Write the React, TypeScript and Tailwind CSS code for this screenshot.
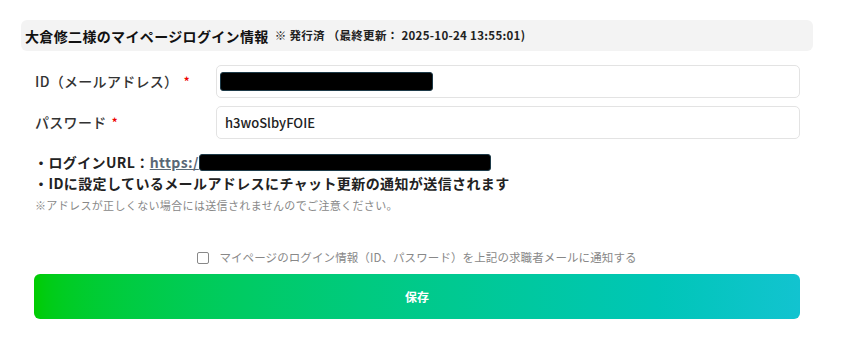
import React from "react";

const font = { fontFamily: '"Noto Sans CJK JP", "Noto Sans", sans-serif' };

function Redact({ w, h }: { w: number; h: number }) {
  return (
    <span
      className="inline-block bg-black border border-[#1d3a48] rounded-[3px] align-middle"
      style={{ width: w, height: h }}
    />
  );
}

export default function App() {
  return (
    <div className="w-[848px] h-[338px] bg-white pl-[21px] pr-[35px] pt-[20px] text-[#333]" style={font}>
      <div className="h-[31px] bg-[#f3f3f3] rounded-md flex items-center px-[4px]">
        <span className="text-[14px] tracking-[0.35px] font-bold text-[#111] leading-none">大倉修二様のマイページログイン情報</span>
        <span className="text-[11.5px] tracking-[0.3px] font-bold text-[#222] ml-[6px] leading-none">※ 発行済 （最終更新： 2025-10-24 13:55:01)</span>
      </div>

      <div className="px-[13px]">
        <div className="flex items-center mt-[14px]">
          <div className="w-[182px] flex items-center text-[14px] tracking-[0.3px] font-medium text-[#333] pl-[1px]">
            <span>ID（メールアドレス）</span>
            <span className="text-[#e00] ml-[5px] text-[13px]">*</span>
          </div>
          <div className="flex-1 h-[33px] border border-[#e3e3e3] rounded-[5px] flex items-center px-[3px]">
            <Redact w={213} h={19} />
          </div>
        </div>
        <div className="flex items-center mt-[8px]">
          <div className="w-[182px] flex items-center text-[14px] tracking-[0.3px] font-medium text-[#333] pl-[1px]">
            <span>パスワード</span>
            <span className="text-[#e00] ml-[5px] text-[13px]">*</span>
          </div>
          <div className="flex-1 h-[33px] border border-[#e3e3e3] rounded-[5px] flex items-center px-[8px] text-[13px] font-medium text-[#222]">
            h3woSlbyFOIE
          </div>
        </div>

        <div className="mt-[13px] text-[14px] tracking-[0.4px] font-bold text-[#222] leading-[21px]">
          <div className="flex items-center">
            <span>・ログインURL：</span>
            <span className="underline font-semibold text-[#5a6876]">https:/</span>
            <Redact w={292} h={17} />
          </div>
          <div>・IDに設定しているメールアドレスにチャット更新の通知が送信されます</div>
        </div>
        <div className="text-[11px] tracking-[0.35px] text-[#888] leading-[22px] pl-[1px]">
          ※アドレスが正しくない場合には送信されませんのでご注意ください。
        </div>

        <div className="flex items-center justify-center mt-[33px] h-[18px]">
          <span className="w-[12px] h-[12px] border border-[#888] rounded-[2px] bg-white mr-[10px]" />
          <span className="text-[11.5px] tracking-[0.1px] text-[#888]">マイページのログイン情報（ID、パスワード）を上記の求職者メールに通知する</span>
        </div>

        <button className="mt-[7px] w-full h-[45px] rounded-md bg-gradient-to-r from-[#00cc00] to-[#12c3d0] text-white text-[12px] font-bold flex items-center justify-center">
          保存
        </button>
      </div>
    </div>
  );
}
